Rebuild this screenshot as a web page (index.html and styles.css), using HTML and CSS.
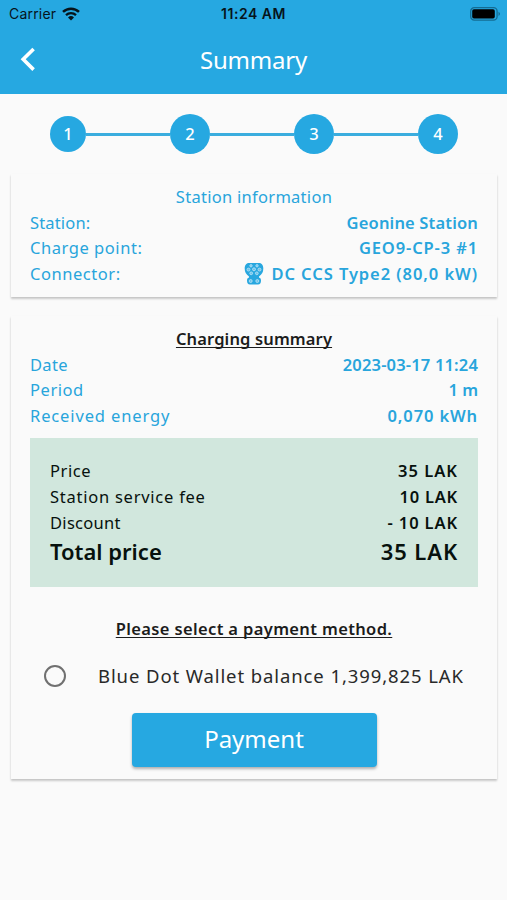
FILE: index.html
```html
<!DOCTYPE html>
<html lang="en">
  <head>
    <meta charset="UTF-8" />
    <meta name="viewport" content="width=device-width, initial-scale=1.0" />
    <title>Summary</title>
    <link rel="stylesheet" href="styles.css">
  </head>
  <body>
    <header>
      <div class="statusbar">
        <div class="carrier">
          <span class="carrier-name">Carrier</span>
          <svg class="wifi" viewBox="0 0 18 14">
            <path d="M1 4.9a11.6 11.6 0 0 1 16 0" fill="none" stroke="#06141b" stroke-width="2.5" />
            <path d="M4 8.1a7.3 7.3 0 0 1 10 0" fill="none" stroke="#06141b" stroke-width="2.3" />
            <path d="M9 13.4L6 10.4a4.4 4.4 0 0 1 6 0z" fill="#06141b" />
          </svg>
        </div>
        <span class="clock">11:24 AM</span>
        <svg class="battery" viewBox="0 0 31 14">
          <rect x="0.7" y="0.7" width="26.4" height="12.4" rx="3.6" fill="none" stroke="#146c93" stroke-width="1.3" />
          <rect x="2.2" y="2.3" width="22.6" height="9.2" rx="1.8" fill="#000" />
          <path d="M28.5 4.8c2 .8 2 3.4 0 4.2z" fill="#146c93" />
        </svg>
      </div>
      <div class="titlebar">
        <svg class="back" viewBox="0 0 16 26">
          <path d="M13.6 3L3.2 13.3L13.6 23.6" fill="none" stroke="#fff" stroke-width="3.6" />
        </svg>
        <h1>Summary</h1>
      </div>
    </header>

    <main>
      <div class="steps">
        <span class="step first">1</span>
        <span class="line"></span>
        <span class="step">2</span>
        <span class="line"></span>
        <span class="step">3</span>
        <span class="line"></span>
        <span class="step">4</span>
      </div>

      <section class="card station">
        <h2>Station information</h2>
        <div class="row"><span class="l-station">Station:</span><b class="v-station">Geonine Station</b></div>
        <div class="row"><span class="l-point">Charge point:</span><b class="v-point">GEO9-CP-3 #1</b></div>
        <div class="row">
          <span class="l-connector">Connector:</span>
          <div class="connector">
            <svg class="plug" viewBox="0 0 20 24">
              <path d="M5 1h10c3 0 4.300 2.500 4.300 5.500 0 3.500-1.300 6-4.300 7.900v1c1.500.3 2 1.500 2 3.200 0 2.700-1 4-3 4H6c-2 0-3-1.300-3-4 0-1.700.5-2.900 2-3.200v-1C2 12.500.700 10 .700 6.500.700 3.500 2 1 5 1z" fill="#28a7df" />
              <g fill="#6cc3ea" stroke="#c8eaf8" stroke-width="0.7">
                <circle cx="7" cy="3.8" r="1.2" />
                <circle cx="13" cy="3.8" r="1.2" />
                <circle cx="4.5" cy="7.6" r="1.5" />
                <circle cx="10" cy="7.3" r="1.5" />
                <circle cx="15.5" cy="7.6" r="1.5" />
                <circle cx="7.2" cy="11.3" r="1.4" />
                <circle cx="12.8" cy="11.3" r="1.4" />
                <circle cx="6.7" cy="19" r="1.5" />
                <circle cx="13.3" cy="19" r="1.5" />
              </g>
            </svg>
            <b class="v-connector">DC CCS Type2 (80,0 kW)</b>
          </div>
        </div>
      </section>

      <section class="card summary">
        <h2 class="underlined">Charging summary</h2>
        <div class="row"><span class="l-date">Date</span><b class="v-date">2023-03-17 11:24</b></div>
        <div class="row"><span class="l-period">Period</span><b class="v-period">1 m</b></div>
        <div class="row"><span class="l-energy">Received energy</span><b class="v-energy">0,070 kWh</b></div>

        <div class="prices">
          <div class="row"><span class="l-price">Price</span><b class="v-price">35 LAK</b></div>
          <div class="row"><span class="l-fee">Station service fee</span><b class="v-fee">10 LAK</b></div>
          <div class="row"><span class="l-discount">Discount</span><b class="v-discount">- 10 LAK</b></div>
          <div class="row total"><b>Total price</b><b class="v-total">35 LAK</b></div>
        </div>

        <h2 class="underlined method">Please select a payment method.</h2>
        <label class="wallet">
          <input type="radio" name="method" />
          <span>Blue Dot Wallet balance 1,399,825 LAK</span>
        </label>
        <button>Payment</button>
      </section>
    </main>
  </body>
</html>
```

FILE: styles.css
```css
* {
  box-sizing: border-box;
}
body {
  margin: 0;
  min-height: 900px;
  background-color: #fafafa;
  color: #28a5dc;
  font-family: "Noto Sans", sans-serif;
  font-size: 16.5px;
}
h1,
h2 {
  margin: 0;
  font-weight: 400;
}
b {
  font-weight: 600;
}

/* header */
header {
  height: 94px;
  background-color: #26a8e1;
}
.statusbar {
  height: 27px;
  padding: 0 6px 0 9px;
  display: grid;
  grid-template-columns: 1fr auto 1fr;
  align-items: center;
  color: #06141b;
  font-family: Inter, sans-serif;
  font-size: 14px;
}
.carrier {
  display: flex;
  align-items: center;
  gap: 6px;
}
.carrier-name {
  letter-spacing: 0.2px;
}
.wifi {
  width: 18px;
  height: 14px;
}
.clock {
  font-weight: 600;
  letter-spacing: 0.5px;
  margin-right: 3px;
}
.battery {
  width: 31px;
  height: 14px;
  justify-self: end;
}
.titlebar {
  height: 64px;
  padding: 0 20px;
  display: grid;
  grid-template-columns: 16px 1fr 16px;
  align-items: center;
}
.back {
  width: 16px;
  height: 26px;
}
h1 {
  color: #fff;
  font-size: 24px;
  letter-spacing: -0.2px;
  text-align: center;
}

/* progress */
.steps {
  height: 80px;
  padding: 0 49px 0 50px;
  display: flex;
  align-items: center;
}
.step {
  width: 40px;
  height: 40px;
  border-radius: 50%;
  background-color: #26a8e1;
  color: #fff;
  font-weight: 500;
  line-height: 40px;
  text-align: center;
}
.first {
  width: 36px;
  height: 36px;
  line-height: 36px;
}
.line {
  flex: 1;
  height: 3px;
  background-color: #3badde;
}

/* cards */
.card {
  margin: 0 10px 0 11px;
  padding: 10px 19px;
  box-shadow: 0 2px 2px rgba(0, 0, 0, 0.18), 0 1px 2px rgba(0, 0, 0, 0.06);
}
.station {
  height: 123px;
}
.summary {
  height: 463px;
  margin-top: 19px;
}
h2 {
  height: 25.6px;
  font-size: 16.5px;
  letter-spacing: 0.28px;
  line-height: 25.6px;
  text-align: center;
}
.underlined {
  color: #1c1c1c;
  font-weight: 600;
  letter-spacing: 0.13px;
  text-decoration: underline;
  text-decoration-thickness: 1px;
  text-underline-offset: 2px;
  text-decoration-skip-ink: none;
}
.row {
  height: 25.6px;
  display: flex;
  justify-content: space-between;
  align-items: center;
  line-height: 25.6px;
  white-space: nowrap;
}
.connector {
  display: flex;
  align-items: center;
  gap: 7px;
}
.plug {
  width: 20px;
  height: 24px;
}

/* tracking of the labels and values */
.l-station,
.v-station,
.v-date {
  letter-spacing: 0.16px;
}
.l-date,
.l-discount {
  letter-spacing: 0.3px;
}
.l-point,
.l-connector,
.l-period,
.l-price {
  letter-spacing: 0.55px;
}
.l-fee,
.v-fee {
  letter-spacing: 0.75px;
}
.l-energy,
.v-point,
.v-energy,
.v-discount,
.v-total {
  letter-spacing: 0.87px;
}
.v-connector {
  letter-spacing: 0.93px;
}
.v-price {
  letter-spacing: 1px;
}

.prices {
  height: 149px;
  margin-top: 10px;
  padding: 20px 20px 18px;
  background-color: #d1e7dd;
  color: #07110d;
}
.total {
  height: 34px;
  font-size: 22px;
}
.method {
  margin-top: 29px;
  letter-spacing: 0.36px;
}

.wallet {
  height: 68px;
  padding-left: 14px;
  display: flex;
  align-items: center;
  gap: 32px;
  color: #292929;
  font-size: 18.5px;
  letter-spacing: 0.9px;
  white-space: nowrap;
}
input {
  appearance: none;
  width: 22px;
  height: 22px;
  margin: 0;
  border: 2px solid #707070;
  border-radius: 50%;
}
button {
  width: 245px;
  height: 54px;
  margin: 3px auto 0;
  padding: 0 0 2px;
  display: block;
  border: 0;
  border-radius: 4px;
  background-color: #26a8e1;
  box-shadow: 0 2px 3px rgba(0, 0, 0, 0.3);
  color: #fff;
  font-family: inherit;
  font-size: 24px;
}
```
